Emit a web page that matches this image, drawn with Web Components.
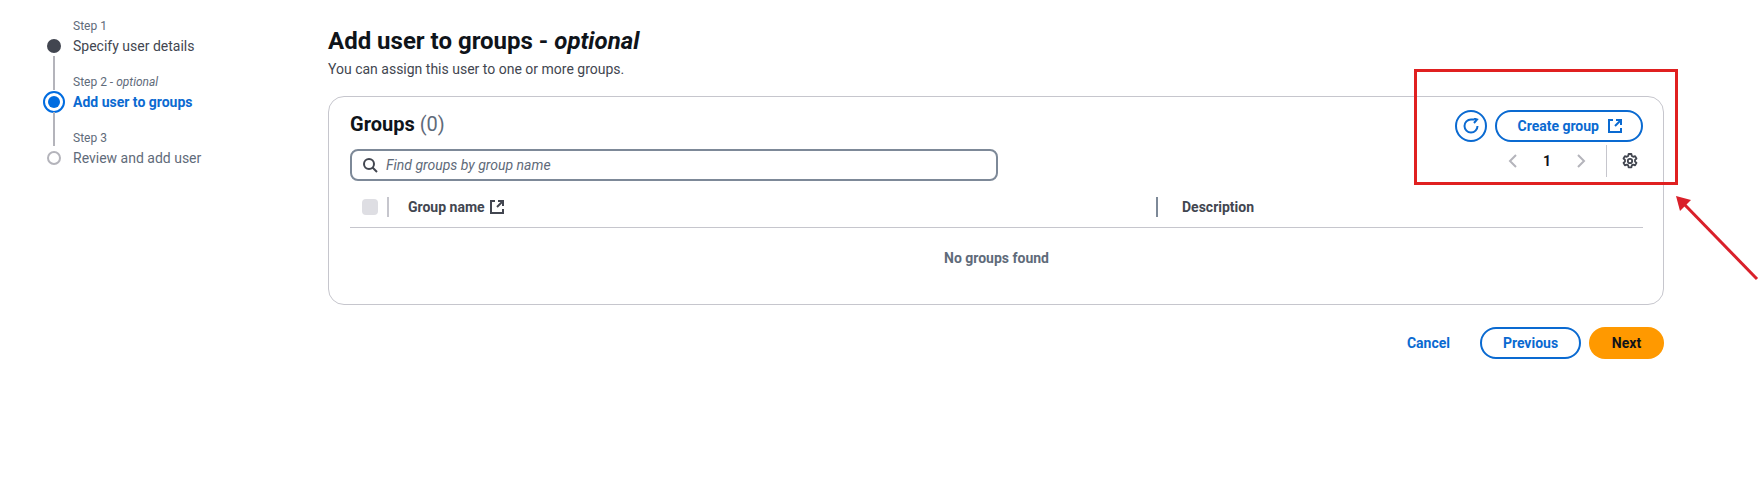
<!DOCTYPE html>
<html lang="en">
<head>
<meta charset="utf-8">
<title>Add user to groups</title>
<style>
  html, body { margin: 0; background: #fff; }
  body { font: 14px/20px Roboto, "Liberation Sans", sans-serif; color: #0f141a; }
</style>
</head>
<body>
<template id="ext-icon">
  <svg viewBox="0 0 16 16" width="16" height="16" fill="none" stroke="currentColor" stroke-width="2"><path d="M6 2H2v12h12v-4"/><path d="M9 2h5v5" stroke-linejoin="miter"/><path d="M14 2 8 8"/></svg>
</template>

<wizard-page>
  <wizard-nav slot="nav">
    <wizard-step label="Step 1" state="done">Specify user details</wizard-step>
    <wizard-step label="Step 2" optional state="active">Add user to groups</wizard-step>
    <wizard-step label="Step 3" state="todo">Review and add user</wizard-step>
  </wizard-nav>
  <page-header>Add user to groups</page-header>
  <groups-card></groups-card>
  <wizard-actions></wizard-actions>
</wizard-page>
<red-callout></red-callout>

<script>
const extIcon = () => document.getElementById("ext-icon").innerHTML;

class WizardPage extends HTMLElement {
  constructor() {
    super();
    this.attachShadow({ mode: "open" }).innerHTML = `
      <style>
        :host { display: flex; width: 1759px; height: 490px; box-sizing: border-box; overflow: hidden; }
        nav { width: 328px; flex: none; }
        main { width: 1336px; flex: none; }
      </style>
      <nav><slot name="nav"></slot></nav>
      <main><slot></slot></main>
    `;
  }
}

class WizardNav extends HTMLElement {
  constructor() {
    super();
    this.attachShadow({ mode: "open" }).innerHTML = `
      <style>:host { display: block; padding-left: 43px; }</style>
      <slot></slot>
    `;
  }
}

class WizardStep extends HTMLElement {
  constructor() {
    super();
    const state = this.getAttribute("state");
    const opt = this.hasAttribute("optional") ? ` - <i>optional</i>` : "";
    const first = state === "done";
    this.attachShadow({ mode: "open" }).innerHTML = `
      <style>
        :host { display: grid; grid-template-columns: 22px auto; grid-template-rows: 36px 20px; column-gap: 8px; }
        .line { justify-self: center; width: 2px; background: #b4b4bb; margin-top: 0; height: 34px; ${first ? "visibility:hidden;" : ""} }
        .small { align-self: end; font-size: 12px; line-height: 16px; color: #5f6b7a; padding-bottom: 2px; }
        .dot { place-self: center; box-sizing: border-box; border-radius: 50%; }
        .done { width: 14px; height: 14px; background: #424650; }
        .active { width: 22px; height: 22px; border: 2px solid #006ce0; padding: 3px; }
        .active::after { content: ""; display: block; width: 12px; height: 12px; border-radius: 50%; background: #006ce0; }
        .todo { width: 14px; height: 14px; border: 2px solid #b4b4bb; }
        .title { white-space: nowrap; color: ${state === "active" ? "#0a6ad1" : state === "done" ? "#424650" : "#5f6b7a"}; font-weight: ${state === "active" ? 700 : 400}; }
      </style>
      <div class="line"></div>
      <div class="small">${this.getAttribute("label")}${opt}</div>
      <div class="dot ${state}"></div>
      <div class="title"><slot></slot></div>
    `;
  }
}

class PageHeader extends HTMLElement {
  constructor() {
    super();
    this.attachShadow({ mode: "open" }).innerHTML = `
      <style>
        :host { display: block; padding-top: 26px; }
        h1 { margin: 0; font-size: 24px; line-height: 30px; font-weight: 700; color: #0f141a; }
        p { margin: 3px 0 0; color: #424650; }
      </style>
      <h1><slot></slot> - <i>optional</i></h1>
      <p>You can assign this user to one or more groups.</p>
    `;
  }
}

class PagerTools extends HTMLElement {
  constructor() {
    super();
    this.attachShadow({ mode: "open" }).innerHTML = `
      <style>
        :host { display: flex; align-items: center; height: 32px; }
        svg { display: block; }
        .chev { color: #b4b4bb; }
        .num { width: 28px; text-align: center; margin: 0 12px; font-weight: 700; color: #0f141a; }
        .sep { width: 1px; height: 32px; background: #c6c6cd; margin: 0 15px 0 17px; }
      </style>
      <svg class="chev" viewBox="0 0 16 16" width="16" height="16" fill="none" stroke="currentColor" stroke-width="2"><path d="M11 2 5 8l6 6"/></svg>
      <span class="num">1</span>
      <svg class="chev" viewBox="0 0 16 16" width="16" height="16" fill="none" stroke="currentColor" stroke-width="2"><path d="m5 2 6 6-6 6"/></svg>
      <span class="sep"></span>
      <svg viewBox="0 0 16 16" width="16" height="16" fill="none" stroke="#424650" stroke-width="1.8" stroke-linejoin="round"><circle cx="8" cy="8" r="2.2"/><path d="M6.6 1h2.8l.4 2 1.4.8 1.9-.7 1.4 2.4-1.5 1.4v1.6l1.5 1.4-1.4 2.4-1.9-.7-1.4.8-.4 2H6.6l-.4-2-1.4-.8-1.9.7-1.4-2.4 1.5-1.4V6.9L1.5 5.5l1.4-2.4 1.9.7 1.4-.8z"/></svg>
    `;
  }
}

class GroupsCard extends HTMLElement {
  constructor() {
    super();
    this.attachShadow({ mode: "open" }).innerHTML = `
      <style>
        :host { display: block; box-sizing: border-box; height: 209px; margin-top: 17px; border: 1px solid #c6c6cd; border-radius: 16px; padding: 13px 20px 0 21px; }
        .top { display: flex; justify-content: space-between; }
        h2 { margin: 0; font-size: 20px; line-height: 28px; font-weight: 700; padding-top: 0; }
        h2 span { font-weight: 400; color: #5f6b7a; }
        .btns { display: flex; gap: 8px; align-items: center; }
        .round { width: 32px; height: 32px; box-sizing: border-box; border: 2px solid #0a6ad1; border-radius: 50%; color: #0a6ad1; display: grid; place-items: center; }
        .create { display: flex; align-items: center; gap: 8px; height: 32px; box-sizing: border-box; border: 2px solid #0a6ad1; border-radius: 16px; padding: 0 18px 0 20px; color: #0a6ad1; font-weight: 700; }
        svg { display: block; }
        .bar { display: flex; justify-content: space-between; margin-top: 3px; }
        .tools { margin-right: 5px; }
        .search { display: flex; align-items: center; gap: 8px; box-sizing: border-box; width: 648px; height: 32px; margin-top: 4px; border: 2px solid #7d8998; border-radius: 8px; padding-left: 10px; color: #5f6b7a; }
        .search i { font-size: 14px; }
        .search svg { color: #424650; }
        .head { display: grid; grid-template-columns: 58px 1fr; height: 41px; align-items: center; margin-top: 5px; border-bottom: 1px solid #c6c6cd; font-weight: 700; color: #424650; }
        .sel { display: flex; align-items: center; }
        .box { width: 16px; height: 16px; margin-left: 12px; border-radius: 4px; background: #dedee3; }
        .rule { width: 2px; height: 20px; background: #c6c6cd; margin-left: 9px; }
        .cols { display: grid; grid-template-columns: 748px 1fr; }
        .cols > div { display: flex; align-items: center; gap: 4px; }
        .rule2 { width: 2px; height: 20px; background: #7d8998; margin-right: 20px; }
        .left { display: flex; }
        .empty { text-align: center; font-weight: 700; color: #5f6b7a; padding-top: 20px; }
      </style>
      <div class="left"></div>
      <div class="top">
        <h2>Groups <span>(0)</span></h2>
        <div class="btns">
          <div class="round"><svg viewBox="0 0 16 16" width="16" height="16" fill="none" stroke="currentColor" stroke-width="2"><path d="M14.5 8A6.5 6.5 0 1 1 8 1.5h3.5"/><path d="M11 5l3-3.5-3-1" stroke-linejoin="miter"/></svg></div>
          <div class="create">Create group ${extIcon()}</div>
        </div>
      </div>
      <div class="bar">
        <div class="search">
          <svg viewBox="0 0 16 16" width="16" height="16" fill="none" stroke="currentColor" stroke-width="2"><circle cx="7" cy="7" r="5"/><path d="m15 15-4.5-4.5"/></svg>
          <i>Find groups by group name</i>
        </div>
        <pager-tools class="tools"></pager-tools>
      </div>
      <div class="head">
        <div class="sel"><span class="box"></span><span class="rule"></span></div>
        <div class="cols">
          <div>Group name ${extIcon()}</div>
          <div><span class="rule2"></span>Description</div>
        </div>
      </div>
      <div class="empty">No groups found</div>
    `;
  }
}

class WizardActions extends HTMLElement {
  constructor() {
    super();
    this.attachShadow({ mode: "open" }).innerHTML = `
      <style>
        :host { display: flex; justify-content: flex-end; align-items: center; margin-top: 22px; font-weight: 700; color: #0a6ad1; }
        .btn { box-sizing: border-box; height: 32px; border-radius: 16px; display: flex; align-items: center; justify-content: center; }
        .cancel { margin-right: 30px; }
        .prev { width: 101px; border: 2px solid #0a6ad1; margin-right: 8px; }
        .next { width: 75px; background: #ff9900; color: #0f141a; }
      </style>
      <span class="cancel">Cancel</span>
      <span class="btn prev">Previous</span>
      <span class="btn next">Next</span>
    `;
  }
}

// annotation drawn on top of the screenshot
class RedCallout extends HTMLElement {
  constructor() {
    super();
    this.attachShadow({ mode: "open" }).innerHTML = `
      <style>
        :host { position: absolute; left: 0; top: 0; width: 1759px; height: 490px; pointer-events: none; }
        svg { display: block; }
      </style>
      <svg width="1759" height="490" fill="none">
        <rect x="1415.5" y="70.5" width="261" height="113" stroke="#e02020" stroke-width="3"/>
        <path d="M1757 279 1684 204" stroke="#d9202a" stroke-width="3"/>
        <path d="M1676 196l15 4-11 11z" fill="#d9202a"/>
      </svg>
    `;
  }
}

customElements.define("wizard-page", WizardPage);
customElements.define("wizard-nav", WizardNav);
customElements.define("wizard-step", WizardStep);
customElements.define("page-header", PageHeader);
customElements.define("pager-tools", PagerTools);
customElements.define("groups-card", GroupsCard);
customElements.define("wizard-actions", WizardActions);
customElements.define("red-callout", RedCallout);
</script>
</body>
</html>
